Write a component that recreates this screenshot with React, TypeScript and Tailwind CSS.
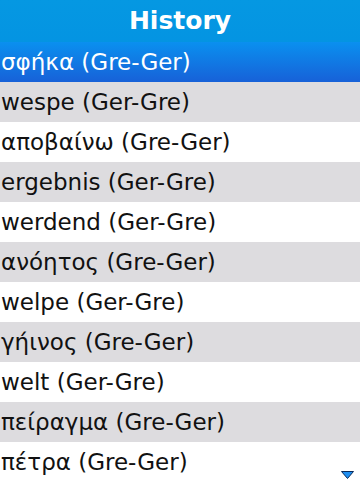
import React from "react";

const items = [
  "wespe (Ger-Gre)",
  "αποβαίνω (Gre-Ger)",
  "ergebnis (Ger-Gre)",
  "werdend (Ger-Gre)",
  "ανόητος (Gre-Ger)",
  "welpe (Ger-Gre)",
  "γήινος (Gre-Ger)",
  "welt (Ger-Gre)",
  "πείραγμα (Gre-Ger)",
  "πέτρα (Gre-Ger)",
];

export default function App() {
  return (
    <div
      className="relative w-[360px] h-[480px] overflow-hidden bg-white text-[#111]"
      style={{ fontFamily: '"DejaVu Sans", sans-serif' }}
    >
      <div className="h-[42px] flex items-center justify-center bg-gradient-to-b from-[#0598e2] to-[#0494e2] text-white font-bold text-[25px] leading-none pb-[1px]">
        History
      </div>
      <div className="h-[40px] flex items-center pl-[1px] text-white text-[23px] bg-gradient-to-b from-[#0a90ef] to-[#1761d8]">
        σφήκα (Gre-Ger)
      </div>
      {items.map((t, i) => (
        <div
          key={i}
          className={`h-[40px] flex items-center pl-[1px] text-[23px] ${
            i % 2 === 0 ? "bg-[#dddcdf]" : "bg-white"
          }`}
        >
          {t}
        </div>
      ))}
      <svg
        className="absolute left-[341px] top-[471px]"
        width="13"
        height="8"
        viewBox="0 0 13 8"
      >
        <polygon points="0.5,0.5 12.5,0.5 6.5,7.5" fill="#1e8ef0" stroke="#0a2a5a" strokeWidth="1" />
      </svg>
    </div>
  );
}
